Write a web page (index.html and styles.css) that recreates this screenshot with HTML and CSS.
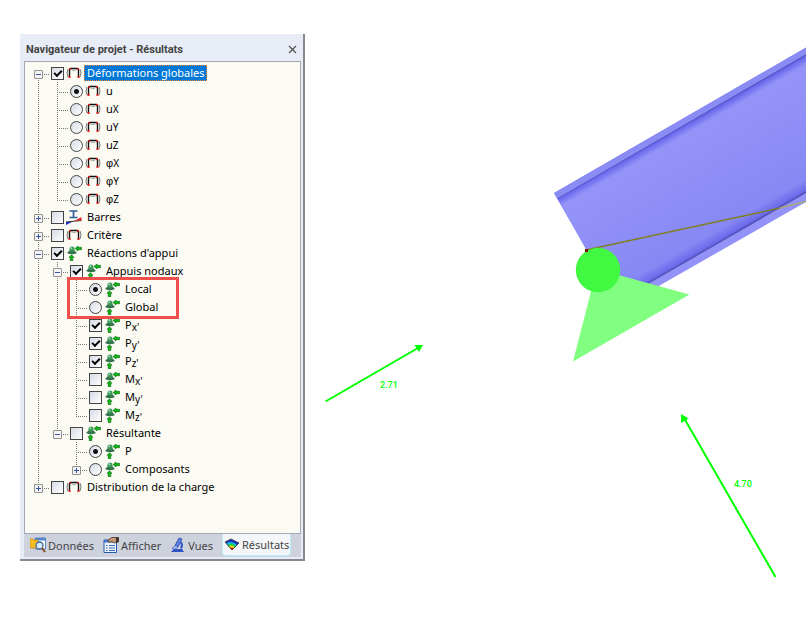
FILE: index.html
```html
<!DOCTYPE html>
<html lang="fr">

<head>
    <meta charset="UTF-8">
    <title>Navigateur de projet - Résultats</title>
    <link rel="stylesheet" href="styles.css">
</head>

<body>
    <!-- shared icons -->
    <svg class="defs" width="0" height="0">
        <symbol id="frame" viewBox="0 0 16 16">
            <path d="M3.500 12V5L4.500 3.500H11.500L12.500 5V12" fill="none" stroke="#181010" stroke-width="1.400"/>
            <path d="M5.500 5Q8 6.500 10.500 5" fill="none" stroke="#aaa"/>
            <path d="M2 4Q0 8 2 12M14 4Q16 8 14 12" fill="none" stroke="#777"/>
            <path d="M3 3h2v1.500H3zM11 3h2v1.500h-2zM2.500 11h2v2h-2zM11.500 11h2v2h-2z" fill="#e3161b"/>
        </symbol>
        <symbol id="support" viewBox="0 0 16 16">
            <path d="M1 8L4 5H8L11 8Q6 10.500 1 8Z" fill="#35734e"/>
            <circle cx="6" cy="4" r="2.600" fill="#3d9a5c"/>
            <circle cx="5.300" cy="3.200" r="1" fill="#9bd9aa"/>
            <path d="M9 3.500L12 1V2.300H15.500V4.700H12V6Z" fill="#0bb512" stroke="#08680d" stroke-width=".6"/>
            <path d="M5.500 9.800L8 12.300H6.800V15.700H4.200V12.300H3Z" fill="#0bb512" stroke="#08680d" stroke-width=".6"/>
        </symbol>
        <symbol id="member" viewBox="0 0 16 16">
            <path d="M3.500 2H11.500M7.500 2V8.500M3.500 8.500H11.500" fill="none" stroke="#2f5f9d" stroke-width="1.700"/>
            <path d="M0 13L15.500 11.500" stroke="#333"/>
            <path d="M0 13V16L6 13Z" fill="#1c2fd0"/>
            <path d="M8 12L15.500 8V11.500Z" fill="#d8242a"/>
        </symbol>
    </svg>

    <div class="main">
        <div class="panel">
            <div class="header">
                <h2>Navigateur de projet - Résultats</h2>
                <button class="close" aria-label="Fermer"><svg width="9" height="9"><path d="M1 1L8 8M8 1L1 8" stroke="#555" stroke-width="1.300"/></svg></button>
            </div>

            <div class="treebox">
                <ul class="tree">
                    <li>
                        <div class="row"><button class="exp minus" aria-label="Réduire"></button>
                            <label><input type="checkbox" checked><svg class="icon"><use href="#frame"/></svg><span class="selected">Déformations globales</span></label></div>
                        <ul>
                            <li><div class="row leaf"><label><input type="radio" name="def" checked><svg class="icon"><use href="#frame"/></svg><span>u</span></label></div></li>
                            <li><div class="row leaf"><label><input type="radio" name="def"><svg class="icon"><use href="#frame"/></svg><span>u<small>X</small></span></label></div></li>
                            <li><div class="row leaf"><label><input type="radio" name="def"><svg class="icon"><use href="#frame"/></svg><span>u<small>Y</small></span></label></div></li>
                            <li><div class="row leaf"><label><input type="radio" name="def"><svg class="icon"><use href="#frame"/></svg><span>u<small>Z</small></span></label></div></li>
                            <li><div class="row leaf"><label><input type="radio" name="def"><svg class="icon"><use href="#frame"/></svg><span class="phi">φ<small>X</small></span></label></div></li>
                            <li><div class="row leaf"><label><input type="radio" name="def"><svg class="icon"><use href="#frame"/></svg><span class="phi">φ<small>Y</small></span></label></div></li>
                            <li><div class="row leaf"><label><input type="radio" name="def"><svg class="icon"><use href="#frame"/></svg><span class="phi">φ<small>Z</small></span></label></div></li>
                        </ul>
                    </li>
                    <li>
                        <div class="row"><button class="exp plus" aria-label="Développer"></button>
                            <label><input type="checkbox"><svg class="icon"><use href="#member"/></svg><span>Barres</span></label></div>
                    </li>
                    <li>
                        <div class="row"><button class="exp plus" aria-label="Développer"></button>
                            <label><input type="checkbox"><svg class="icon"><use href="#frame"/></svg><span>Critère</span></label></div>
                    </li>
                    <li>
                        <div class="row"><button class="exp minus" aria-label="Réduire"></button>
                            <label><input type="checkbox" checked><svg class="icon"><use href="#support"/></svg><span>Réactions d'appui</span></label></div>
                        <ul>
                            <li>
                                <div class="row"><button class="exp minus" aria-label="Réduire"></button>
                                    <label><input type="checkbox" checked><svg class="icon"><use href="#support"/></svg><span>Appuis nodaux</span></label></div>
                                <ul class="nodal">
                                    <li><div class="row leaf"><label><input type="radio" name="axes" checked><svg class="icon"><use href="#support"/></svg><span>Local</span></label></div></li>
                                    <li><div class="row leaf"><label><input type="radio" name="axes"><svg class="icon"><use href="#support"/></svg><span>Global</span></label></div></li>
                                    <li><div class="row leaf"><label><input type="checkbox" checked><svg class="icon"><use href="#support"/></svg><span>P<small class="sub">x'</small></span></label></div></li>
                                    <li><div class="row leaf"><label><input type="checkbox" checked><svg class="icon"><use href="#support"/></svg><span>P<small class="sub">y'</small></span></label></div></li>
                                    <li><div class="row leaf"><label><input type="checkbox" checked><svg class="icon"><use href="#support"/></svg><span>P<small class="sub">z'</small></span></label></div></li>
                                    <li><div class="row leaf"><label><input type="checkbox"><svg class="icon"><use href="#support"/></svg><span>M<small class="sub">x'</small></span></label></div></li>
                                    <li><div class="row leaf"><label><input type="checkbox"><svg class="icon"><use href="#support"/></svg><span>M<small class="sub">y'</small></span></label></div></li>
                                    <li><div class="row leaf"><label><input type="checkbox"><svg class="icon"><use href="#support"/></svg><span>M<small class="sub">z'</small></span></label></div></li>
                                </ul>
                            </li>
                            <li>
                                <div class="row"><button class="exp minus" aria-label="Réduire"></button>
                                    <label><input type="checkbox"><svg class="icon"><use href="#support"/></svg><span>Résultante</span></label></div>
                                <ul>
                                    <li><div class="row leaf"><label><input type="radio" name="res" checked><svg class="icon"><use href="#support"/></svg><span>P</span></label></div></li>
                                    <li>
                                        <div class="row"><button class="exp plus" aria-label="Développer"></button>
                                            <label><input type="radio" name="res"><svg class="icon"><use href="#support"/></svg><span>Composants</span></label></div>
                                    </li>
                                </ul>
                            </li>
                        </ul>
                    </li>
                    <li>
                        <div class="row"><button class="exp plus" aria-label="Développer"></button>
                            <label><input type="checkbox"><svg class="icon"><use href="#frame"/></svg><span>Distribution de la charge</span></label></div>
                    </li>
                </ul>
            </div>

            <div class="tabs">
                <button class="tab">
                    <svg width="16" height="16" viewBox="0 0 16 16">
                        <path d="M5 1H15.500V12H5Z" fill="#fff" stroke="#5c86c4"/>
                        <path d="M5 1H15.500V3.500H5Z" fill="#4f86d0"/>
                        <path d="M0 2H3L4 3H8V11H0Z" fill="#f5bd25" stroke="#c38a10" stroke-width=".7"/>
                        <circle cx="9.500" cy="8.500" r="3.500" fill="#d7ecfb" stroke="#41679b" stroke-width="1.300"/>
                        <path d="M12 11L15 15" stroke="#8a4a1e" stroke-width="2"/>
                    </svg>
                    <span>Données</span>
                </button>
                <button class="tab">
                    <svg width="16" height="16" viewBox="0 0 16 16">
                        <path d="M1 3H13.500V15.500H1Z" fill="#edf3fd" stroke="#2859aa"/>
                        <path d="M1 3H13.500V5.500H1Z" fill="#3f75c8"/>
                        <path d="M3 8.500H4.500M6 8.500H12M3 11H4.500M6 11H12M3 13.500H4.500M6 13.500H12" stroke="#3b68b3"/>
                        <path d="M5 3L9 .5H15.500V5L11 6L9 4.500L6 5.500Z" fill="#c79b78" stroke="#4c3427" stroke-width=".8"/>
                        <path d="M13 .5H15.500V5H13Z" fill="#38302c"/>
                    </svg>
                    <span>Afficher</span>
                </button>
                <button class="tab">
                    <svg width="16" height="16" viewBox="0 0 16 16">
                        <path d="M9 1L12 2L8 10L5 8.500Z" fill="#5a7fe6" stroke="#1d3a98" stroke-width=".7"/>
                        <path d="M6 8L2 11.500L4.500 12.500L8 10Z" fill="#a9bdf5" stroke="#2546ad" stroke-width=".7"/>
                        <path d="M11 5Q13 8 11 11.500" fill="none" stroke="#3157c4" stroke-width="2"/>
                        <path d="M4 12H12L14 15H1Z" fill="#2f54c2"/>
                    </svg>
                    <span>Vues</span>
                </button>
                <button class="tab active">
                    <svg width="16" height="16" viewBox="0 0 16 16">
                        <path d="M1 5L7 2L15 6L8 13Z" fill="#1733c8"/>
                        <path d="M2 6.500Q8 3 13 8L8 13Z" fill="#18b9d8"/>
                        <path d="M3.500 8Q8 5 12 9.200L8 13Z" fill="#2fd043"/>
                        <path d="M4.800 9.500Q8 7.500 10.800 10.500L8 13Z" fill="#f5e525"/>
                        <path d="M6 11Q8 9.500 9.800 11.500L8 13Z" fill="#e82818"/>
                        <path d="M1 5L7 2L15 6L8 13Z" fill="none" stroke="#222" stroke-width=".7"/>
                    </svg>
                    <span>Résultats</span>
                </button>
            </div>
        </div>

        <!-- model view -->
        <svg class="scene" viewBox="305 0 501 635" preserveAspectRatio="xMinYMin slice">
            <defs>
                <linearGradient id="web" gradientUnits="userSpaceOnUse" x1="650" y1="144" x2="710" y2="248">
                    <stop offset="0" stop-color="#4c4cb8"/>
                    <stop offset=".02" stop-color="#6b6bee"/>
                    <stop offset=".08" stop-color="#9494f8"/>
                    <stop offset=".9" stop-color="#8888f4"/>
                    <stop offset=".98" stop-color="#6c6cec"/>
                    <stop offset="1" stop-color="#4c4cb0"/>
                </linearGradient>
            </defs>
            <path d="M554 193L806 47.500V202L657 287L600 275L586 249Z" fill="#9292f8"/>
            <path d="M557 198L806 54V193L648 284L600 275L586 249Z" fill="url(#web)"/>
            <path d="M554 193L806 47.500V54L557 198.500Z" fill="#8b8bf4"/>
            <path d="M586 250L780 208" stroke="#7f7f20" stroke-width="1.300"/>
            <path d="M780 208L806 201.500" stroke="#a8a878" stroke-width="1.300"/>
            <path d="M600 270L689.500 294.500L573 361.500L594 280Z" fill="#80ff80"/>
            <circle cx="598" cy="270" r="22.200" fill="#40f940"/>
            <path d="M585 249h3v3h-3z" fill="#7a1010"/>

            <g stroke="#00ff00" stroke-width="2" fill="#00ff00">
                <path d="M325.500 401.500L418 348"/>
                <path d="M423 345L419 352L414.500 345Z" stroke="none"/>
                <path d="M775.500 577L684 418"/>
                <path d="M681 414L688.500 418.500L681 423Z" stroke="none"/>
            </g>
            <text class="value" x="380" y="388">2.71</text>
            <text class="value" x="734" y="487">4.70</text>
        </svg>
    </div>
</body>

</html>
```
FILE: styles.css
```css
*, *::before, *::after {
    margin: 0px;
    padding: 0px;
    box-sizing: border-box;
}

body {
    font-family: "Noto Sans", "Open Sans", sans-serif;
    font-size: 11px;
    color: black;
    background-color: white;
}

button {
    font: inherit;
    border: none;
    background-color: transparent;
}

.defs {
    position: absolute;
}

.main {
    display: flex;
    min-height: 100vh;
}

.panel {
    display: flex;
    flex-direction: column;
    flex: none;
    width: 285px;
    margin: 34px 0px 74px 20px;
    padding: 0px 2px 2px 4px;
    background-color: #e7ecf6;
    border-right: 2px solid #87898f;
    border-bottom: 2px solid #87898f;
}

.header {
    display: flex;
    align-items: center;
    justify-content: space-between;
    height: 27px;
    padding: 4px 3px 0px 2px;
}

.header h2 {
    font-family: Roboto, sans-serif;
    font-size: 11px;
    font-weight: 700;
    color: #444444;
}

.close {
    display: flex;
    padding: 1px;
}

.treebox {
    flex: 1;
    background-color: #fbfbf3;
    border: 1px solid #a2a8b5;
    padding: 2px 0px 2px 9px;
}

ul {
    list-style-type: none;
}

.tree ul {
    margin-left: 19px;
}

/* dotted line going down, it stops at the last item */
.tree li {
    background: repeating-linear-gradient(#777777 0px 1px, transparent 1px 2px) 4px 0px / 1px 100% no-repeat;
}

.tree li:last-child {
    background-size: 1px 10px;
}

.tree > li:first-child {
    background-position: 4px 10px;
}

.row {
    display: flex;
    align-items: center;
    height: 18px;
    background: repeating-linear-gradient(90deg, #777777 0px 1px, transparent 1px 2px) 4px 10px / 12px 1px no-repeat;
}

.leaf {
    padding-left: 9px;
}

.exp {
    width: 9px;
    height: 9px;
    margin-top: 2px;
    border: 1px solid #919191;
    border-radius: 1px;
    background: linear-gradient(#3a55a5, #3a55a5) center / 5px 1px no-repeat, #f4f4f4;
}

.plus {
    background: linear-gradient(#3a55a5, #3a55a5) center / 5px 1px no-repeat, linear-gradient(#3a55a5, #3a55a5) center / 1px 5px no-repeat, #f4f4f4;
}

label {
    display: flex;
    align-items: center;
    padding-left: 8px;
    line-height: 16px;
    white-space: nowrap;
}

input {
    appearance: none;
    width: 13px;
    height: 13px;
    border: 1px solid #444444;
    background: linear-gradient(135deg, #d5dae5, #ffffff);
}

input[type="radio"] {
    border-radius: 50%;
}

input[type="radio"]:checked {
    background: radial-gradient(circle, #111111 2px, transparent 3px), linear-gradient(135deg, #d5dae5, #ffffff);
}

input[type="checkbox"]:checked::before {
    content: "";
    display: block;
    width: 8px;
    height: 5px;
    margin: 2px;
    border-left: 2px solid black;
    border-bottom: 2px solid black;
    transform: rotate(-45deg);
}

.icon {
    width: 16px;
    height: 16px;
    margin: 0px 2px;
}

label span {
    padding: 0px 2px 0px 3px;
}

.selected {
    color: white;
    background-color: #0078d7;
    outline: 1px dotted #ff8728;
    outline-offset: -1px;
}

.phi {
    font-family: "Liberation Sans", sans-serif;
}

small {
    font-family: "Noto Sans", sans-serif;
    font-size: 10px;
    line-height: 10px;
}

.sub {
    vertical-align: -2px;
}

/* red frame over Local / Global */
.nodal {
    position: relative;
}

.nodal::after {
    content: "";
    position: absolute;
    left: -5px;
    top: -3px;
    width: 112px;
    height: 42px;
    border: 3px solid #ef4f4c;
}

.tabs {
    display: flex;
    align-items: flex-start;
    gap: 9px;
    height: 23px;
    padding-left: 6px;
    background-color: #ced2dd;
}

.tab {
    display: flex;
    align-items: center;
    gap: 2px;
    height: 22px;
    color: #444444;
}

.active {
    padding: 0px 1px;
    background-color: #f4f6f9;
    border: 1px solid #b9f0f5;
    border-top: none;
    border-radius: 0px 0px 4px 4px;
}

.scene {
    display: block;
    flex: 1;
    min-width: 0px;
    height: 100vh;
}

.value {
    font-family: Roboto, sans-serif;
    font-size: 9px;
    font-weight: 500;
    fill: #00ff00;
}
```
